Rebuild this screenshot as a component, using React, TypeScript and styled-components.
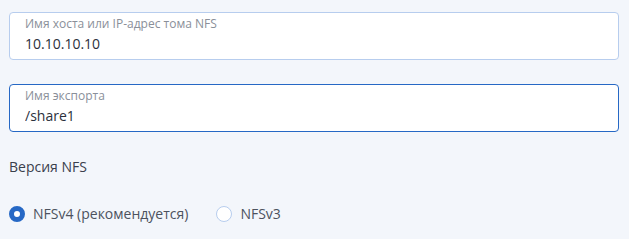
import React, { useState } from "react";
import styled, { createGlobalStyle } from "styled-components";

const GlobalStyle = createGlobalStyle`
  html, body {
    margin: 0;
    padding: 0;
    background: #f3f6fb;
    font-family: "Open Sans", "Noto Sans", sans-serif;
  }
`;

const Form = styled.div`
  padding: 12px 10px 0 9px;
  display: flex;
  flex-direction: column;
`;

const Field = styled.label<{ $focused?: boolean }>`
  display: flex;
  flex-direction: column;
  box-sizing: border-box;
  height: 48px;
  padding: 3px 15px 0;
  margin-bottom: 24px;
  background: #fff;
  border: 1px solid ${(p) => (p.$focused ? "#2668c5" : "#b7cdee")};
  border-radius: 4px;
`;

const FieldLabel = styled.span`
  font-size: 12px;
  line-height: 16px;
  color: #8a8f99;
`;

const FieldInput = styled.input`
  border: none;
  outline: none;
  padding: 0;
  margin-top: 2px;
  background: transparent;
  font-family: inherit;
  font-size: 14px;
  line-height: 20px;
  color: #2b303b;
`;

const SectionTitle = styled.div`
  font-size: 14px;
  line-height: 20px;
  color: #3a404c;
  margin-top: 1px;
`;

const RadioRow = styled.div`
  display: flex;
  gap: 28px;
  margin-top: 27px;
`;

const RadioItem = styled.label`
  display: flex;
  align-items: center;
  gap: 8px;
  cursor: pointer;
  font-size: 14px;
  line-height: 20px;
  color: #4c525e;
`;

const Circle = styled.span<{ $checked: boolean }>`
  box-sizing: border-box;
  width: 16px;
  height: 16px;
  border-radius: 50%;
  background: #fff;
  border: ${(p) => (p.$checked ? "5px solid #2668c5" : "1px solid #b7cdee")};
`;

const options = ["NFSv4 (рекомендуется)", "NFSv3"];

const App: React.FC = () => {
  const [host, setHost] = useState("10.10.10.10");
  const [share, setShare] = useState("/share1");
  const [version, setVersion] = useState(0);

  return (
    <Form>
      <GlobalStyle />
      <Field>
        <FieldLabel>Имя хоста или IP-адрес тома NFS</FieldLabel>
        <FieldInput value={host} onChange={(e) => setHost(e.target.value)} />
      </Field>
      <Field $focused>
        <FieldLabel>Имя экспорта</FieldLabel>
        <FieldInput value={share} onChange={(e) => setShare(e.target.value)} />
      </Field>
      <SectionTitle>Версия NFS</SectionTitle>
      <RadioRow>
        {options.map((o, i) => (
          <RadioItem key={o} onClick={() => setVersion(i)}>
            <Circle $checked={version === i} />
            {o}
          </RadioItem>
        ))}
      </RadioRow>
    </Form>
  );
};

export default App;
